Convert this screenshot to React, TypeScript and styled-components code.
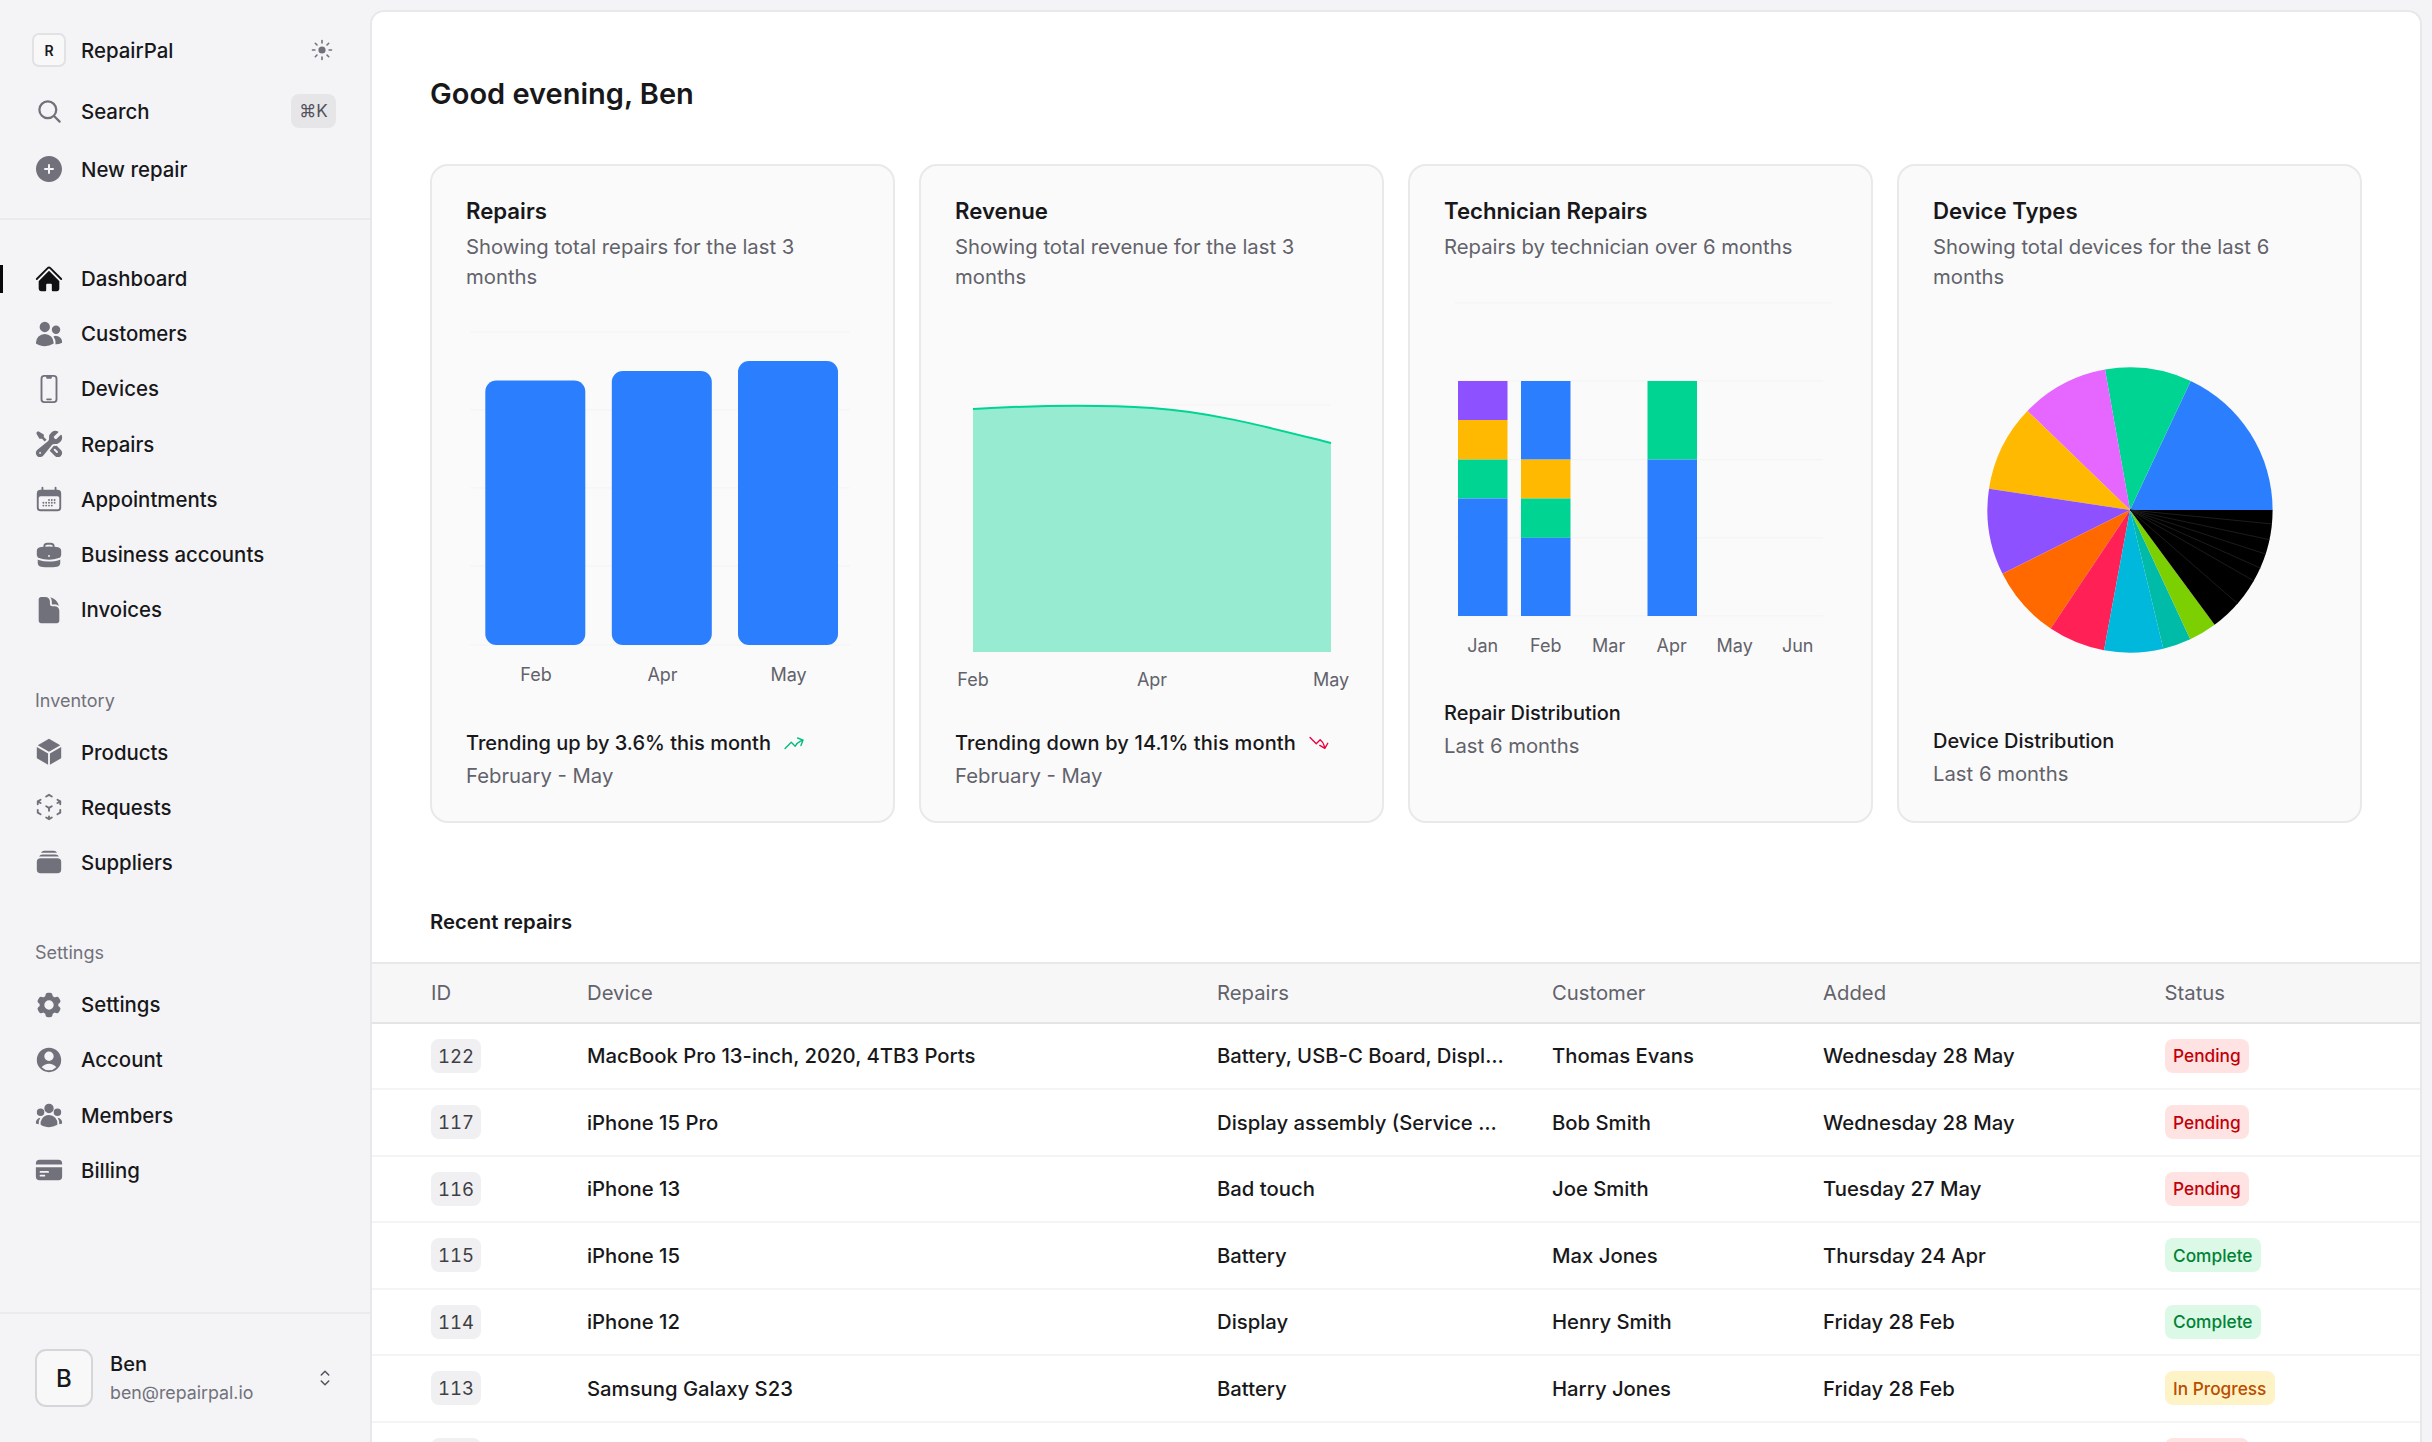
import React from "react";
import styled, { createGlobalStyle } from "styled-components";
import {
  HiBriefcase,
  HiCalendarDays,
  HiChevronUpDown,
  HiCog6Tooth,
  HiCreditCard,
  HiCube,
  HiCubeTransparent,
  HiDocument,
  HiHome,
  HiOutlineArrowTrendingDown,
  HiOutlineArrowTrendingUp,
  HiOutlineDevicePhoneMobile,
  HiOutlineMagnifyingGlass,
  HiPlusCircle,
  HiRectangleStack,
  HiUserCircle,
  HiUserGroup,
  HiUsers,
  HiWrenchScrewdriver,
} from "react-icons/hi2";

const GlobalStyle = createGlobalStyle`
  html, body, #root {
    margin: 0;
    height: 100%;
    overflow: hidden;
  }
  body {
    font-family: Inter, "Liberation Sans", sans-serif;
    color: #18181b;
    background: #f4f4f6;
  }
`;

const Shell = styled.div`
  display: flex;
  height: 100vh;
`;

const Sidebar = styled.aside`
  width: 370px;
  flex-shrink: 0;
  display: flex;
  flex-direction: column;
  background: #f4f4f6;
`;

const SideTop = styled.div`
  padding: 33px 34px 32px 32px;
  border-bottom: 2px solid #ebebee;
  display: flex;
  flex-direction: column;
`;

const TopRow = styled.div<{ $gap: number }>`
  height: 34px;
  display: flex;
  align-items: center;
  gap: 15px;
  margin-bottom: ${(p) => p.$gap}px;
  font-size: 20.4px;
  font-weight: 500;
`;

const LogoBox = styled.div`
  width: 34px;
  height: 34px;
  box-sizing: border-box;
  border: 2px solid #e2e2e5;
  border-radius: 7px;
  background: #f8f8f9;
  display: flex;
  align-items: center;
  justify-content: center;
  font-size: 14px;
  font-weight: 600;
`;

const IconSlot = styled.span<{ $active?: boolean }>`
  width: 34px;
  height: 34px;
  flex-shrink: 0;
  display: flex;
  align-items: center;
  justify-content: center;
  color: ${(p) => (p.$active ? "#111113" : "#71717b")};
`;

const Push = styled.span<{ $right?: number; $color?: string }>`
  margin-left: auto;
  margin-right: ${(p) => p.$right ?? 0}px;
  color: ${(p) => p.$color ?? "inherit"};
  display: flex;
`;

const Kbd = styled.kbd`
  width: 45px;
  height: 34px;
  border-radius: 8px;
  background: #e6e6e8;
  color: #52525b;
  font-family: Inter, "DejaVu Sans", sans-serif;
  font-size: 17px;
  font-weight: 400;
  display: flex;
  align-items: center;
  justify-content: center;
`;

const NavGroup = styled.nav<{ $top: number }>`
  padding: 0 32px;
  margin-top: ${(p) => p.$top}px;
`;

const GroupLabel = styled.div`
  height: 28px;
  line-height: 28px;
  margin-bottom: 9.6px;
  padding-left: 3px;
  font-size: 18px;
  color: #71717b;
`;

const NavItem = styled.a<{ $active?: boolean }>`
  position: relative;
  height: 55.2px;
  display: flex;
  align-items: center;
  gap: 15px;
  font-size: 20.4px;
  font-weight: 500;
  color: #18181b;

  ${(p) =>
    p.$active &&
    `&::before {
      content: "";
      position: absolute;
      left: -32px;
      top: 13.6px;
      width: 3px;
      height: 28px;
      background: #09090b;
    }`}
`;

const SideFooter = styled.div`
  margin-top: auto;
  height: 130px;
  box-sizing: border-box;
  border-top: 2px solid #ebebee;
  padding: 0 32px 0 35px;
  display: flex;
  align-items: center;
  gap: 17px;
`;

const Avatar = styled.div`
  width: 58px;
  height: 58px;
  box-sizing: border-box;
  border: 2px solid #d6d6da;
  border-radius: 11px;
  background: #f8f8f9;
  display: flex;
  align-items: center;
  justify-content: center;
  font-size: 24px;
  font-weight: 500;
`;

const UserName = styled.div`
  font-size: 20px;
  line-height: 28px;
  font-weight: 500;
`;

const UserMail = styled.div`
  margin-top: 2px;
  font-size: 17.8px;
  line-height: 26px;
  color: #71717b;
`;

const Main = styled.main`
  flex: 1;
  min-width: 0;
  margin: 10px 10px 0 0;
  background: #fff;
  border: 2px solid #e8e8ea;
  border-bottom: none;
  border-radius: 14px 14px 0 0;
  box-sizing: border-box;
  overflow: hidden;
`;

const Content = styled.div`
  padding: 62px 58px 0;
`;

const Title = styled.h1`
  margin: 0;
  font-size: 29px;
  line-height: 40px;
  font-weight: 600;
`;

const CardGrid = styled.div`
  margin-top: 50px;
  display: grid;
  grid-template-columns: repeat(4, 465px);
  gap: 24px;
`;

const Card = styled.section`
  height: 659px;
  box-sizing: border-box;
  padding: 29px 35px 29px 34px;
  background: #fafafa;
  border: 2px solid #e9e9eb;
  border-radius: 18px;
`;

const CardTitle = styled.h2`
  margin: 0 0 5px;
  font-size: 22.2px;
  line-height: 32px;
  font-weight: 600;
`;

const CardDesc = styled.p`
  margin: 0;
  font-size: 20.3px;
  line-height: 30px;
  color: #62626b;
`;

const ChartSvg = styled.svg`
  display: block;
  width: 391px;
  margin-top: -1px;
  overflow: visible;
`;

const AxisLabel = styled.text`
  font-size: 18px;
  fill: #62626b;
  text-anchor: middle;
  dominant-baseline: central;
`;

const FootStrong = styled.div<{ $track?: number }>`
  display: flex;
  align-items: center;
  gap: 12px;
  font-size: 20px;
  line-height: 32px;
  font-weight: 500;
  letter-spacing: ${(p) => p.$track ?? 0}px;
`;

const FootMuted = styled.div`
  margin-top: 1px;
  font-size: 20.3px;
  line-height: 32px;
  color: #62626b;
`;

const SectionTitle = styled.h3`
  margin: 84px 0 25px;
  font-size: 20.3px;
  line-height: 30px;
  font-weight: 600;
`;

const COLUMNS = "156px 630px 335px 271px 341.5px 1fr";

const HeadRow = styled.div`
  display: grid;
  grid-template-columns: ${COLUMNS};
  align-items: center;
  height: 61.5px;
  box-sizing: border-box;
  padding-left: 59px;
  background: #f7f7f8;
  border-top: 2px solid #e8e8ea;
  border-bottom: 2px solid #e4e4e7;
  font-size: 20.3px;
  color: #62626b;
`;

const Row = styled.div`
  display: grid;
  grid-template-columns: ${COLUMNS};
  align-items: center;
  height: 66.5px;
  box-sizing: border-box;
  padding-left: 59px;
  border-bottom: 2px solid #f4f4f5;
  font-size: 20.3px;
  font-weight: 500;
`;

const IdTag = styled.span`
  width: 50px;
  height: 34px;
  border-radius: 8px;
  background: #f0f0f2;
  color: #3f3f46;
  font-size: 18.5px;
  font-weight: 400;
  font-variant-numeric: tabular-nums;
  display: flex;
  align-items: center;
  justify-content: center;
`;

const statusColors = {
  Pending: { bg: "#ffe2e2", fg: "#c10007" },
  Complete: { bg: "#dcf8e6", fg: "#008236" },
  "In Progress": { bg: "#fef3c6", fg: "#bb4d00" },
};

type Status = keyof typeof statusColors;

const StatusTag = styled.span<{ $status: Status }>`
  justify-self: start;
  height: 34px;
  padding: 0 8.5px;
  border-radius: 8px;
  background: ${(p) => statusColors[p.$status].bg};
  color: ${(p) => statusColors[p.$status].fg};
  font-size: 17.3px;
  display: flex;
  align-items: center;
`;

const StrongSearchIcon = styled(HiOutlineMagnifyingGlass)`
  stroke-width: 2;
`;

const mainNav = [
  { label: "Dashboard", icon: HiHome, active: true },
  { label: "Customers", icon: HiUsers },
  { label: "Devices", icon: HiOutlineDevicePhoneMobile },
  { label: "Repairs", icon: HiWrenchScrewdriver },
  { label: "Appointments", icon: HiCalendarDays },
  { label: "Business accounts", icon: HiBriefcase },
  { label: "Invoices", icon: HiDocument },
];

const inventoryNav = [
  { label: "Products", icon: HiCube },
  { label: "Requests", icon: HiCubeTransparent },
  { label: "Suppliers", icon: HiRectangleStack },
];

const settingsNav = [
  { label: "Settings", icon: HiCog6Tooth },
  { label: "Account", icon: HiUserCircle },
  { label: "Members", icon: HiUserGroup },
  { label: "Billing", icon: HiCreditCard },
];

const repairs: [string, string, string, string, string, Status][] = [
  ["122", "MacBook Pro 13-inch, 2020, 4TB3 Ports", "Battery, USB-C Board, Displ…", "Thomas Evans", "Wednesday 28 May", "Pending"],
  ["117", "iPhone 15 Pro", "Display assembly (Service …", "Bob Smith", "Wednesday 28 May", "Pending"],
  ["116", "iPhone 13", "Bad touch", "Joe Smith", "Tuesday 27 May", "Pending"],
  ["115", "iPhone 15", "Battery", "Max Jones", "Thursday 24 Apr", "Complete"],
  ["114", "iPhone 12", "Display", "Henry Smith", "Friday 28 Feb", "Complete"],
  ["113", "Samsung Galaxy S23", "Battery", "Harry Jones", "Friday 28 Feb", "In Progress"],
  ["112", "iPhone 14", "Battery", "Amy Clark", "Friday 28 Feb", "Pending"],
];

const BLUE = "#2b7fff";
const GREEN = "#00d492";
const AMBER = "#ffb900";
const PURPLE = "#8e51ff";
const GRID = "#f3f3f4";

const NavLinks = ({ items }: { items: typeof mainNav }) => (
  <>
    {items.map((item) => (
      <NavItem key={item.label} $active={item.active}>
        <IconSlot $active={item.active}>
          <item.icon size={30} />
        </IconSlot>
        {item.label}
      </NavItem>
    ))}
  </>
);

const SunIcon = () => (
  <svg width="22" height="22" viewBox="0 0 22 22" stroke="#71717b" strokeWidth="1.6" strokeLinecap="round" fill="#71717b">
    <circle cx="11" cy="11" r="3.6" stroke="none" />
    <path d="M11 1.5v2.4M11 18.1v2.4M1.5 11h2.4M18.1 11h2.4M4.3 4.3 6 6M16 16l1.7 1.7M4.3 17.7 6 16M16 6l1.7-1.7" />
  </svg>
);

const Grid = ({ ys, x1, x2 }: { ys: number[]; x1: number; x2: number }) => (
  <>
    {ys.map((y) => (
      <line key={y} x1={x1} x2={x2} y1={y} y2={y} stroke={GRID} strokeWidth="1" />
    ))}
  </>
);

const RepairsChart = () => (
  <ChartSvg height="436" viewBox="-1 0 391 436">
    <Grid ys={[41, 119, 197, 275, 354]} x1={3} x2={383} />
    <rect x="18.3" y="89.6" width="100" height="264.4" rx="11" fill={BLUE} />
    <rect x="144.8" y="80" width="100" height="274" rx="11" fill={BLUE} />
    <rect x="271" y="70" width="100" height="284" rx="11" fill={BLUE} />
    <AxisLabel x="69" y="383">Feb</AxisLabel>
    <AxisLabel x="195.5" y="383">Apr</AxisLabel>
    <AxisLabel x="321.5" y="383">May</AxisLabel>
  </ChartSvg>
);

const RevenueChart = () => {
  const top = "M17 118C76 114.5 137 113 196 117C256 121 315 137 375 152";
  return (
    <ChartSvg height="436" viewBox="-1 0 391 436">
      <Grid ys={[114]} x1={17} x2={375} />
      <path d={`${top}V361H17Z`} fill={GREEN} fillOpacity="0.4" />
      <path d={top} fill="none" stroke={GREEN} strokeWidth="2" />
      <AxisLabel x="17" y="388">Feb</AxisLabel>
      <AxisLabel x="196" y="388">Apr</AxisLabel>
      <AxisLabel x="375" y="388">May</AxisLabel>
    </ChartSvg>
  );
};

const stacks = [
  { x: 14, parts: [[120, 159, PURPLE], [159, 198.6, AMBER], [198.6, 237.5, GREEN], [237.5, 355, BLUE]] },
  { x: 77, parts: [[120, 198.6, BLUE], [198.6, 237.5, AMBER], [237.5, 276.8, GREEN], [276.8, 355, BLUE]] },
  { x: 203.5, parts: [[120, 198.6, GREEN], [198.6, 355, BLUE]] },
] as { x: number; parts: [number, number, string][] }[];

const TechnicianChart = () => (
  <ChartSvg height="436" viewBox="0 0 391 436">
    <Grid ys={[42]} x1={11} x2={388} />
    <Grid ys={[120, 198.6, 276.8, 355]} x1={11} x2={379} />
    {stacks.map((s) =>
      s.parts.map(([y1, y2, fill]) => (
        <rect key={`${s.x}-${y1}`} x={s.x} y={y1} width="49.5" height={y2 - y1} fill={fill} />
      )),
    )}
    {["Jan", "Feb", "Mar", "Apr", "May", "Jun"].map((m, i) => (
      <AxisLabel key={m} x={38.7 + i * 63} y="384">{m}</AxisLabel>
    ))}
  </ChartSvg>
);

// angles in degrees, counter-clockwise from east, as read off the reference
const slices: [number, number, string][] = [
  [0, 64.8, BLUE],
  [64.8, 100.1, GREEN],
  [100.1, 136, "#e667ff"],
  [136, 171.4, AMBER],
  [171.4, 206.6, PURPLE],
  [206.6, 236.2, "#ff6900"],
  [236.2, 259.5, "#ff2056"],
  [259.5, 283.5, "#00b8db"],
  [283.5, 295, "#00bba7"],
  [295, 306.4, "#7ccf00"],
  [306.4, 360, "#000"],
];

const PIE_X = 197;
const PIE_Y = 219;
const PIE_R = 142.6;

const piePoint = (deg: number, r = PIE_R) => {
  const rad = (deg * Math.PI) / 180;
  return `${PIE_X + r * Math.cos(rad)} ${PIE_Y - r * Math.sin(rad)}`;
};

const DeviceChart = () => (
  <ChartSvg height="434" viewBox="0 0 391 434">
    {slices.map(([a, b, fill]) => (
      <path
        key={a}
        d={`M${PIE_X} ${PIE_Y}L${piePoint(a)}A${PIE_R} ${PIE_R} 0 ${b - a > 180 ? 1 : 0} 0 ${piePoint(b)}Z`}
        fill={fill}
      />
    ))}
    {[354.4, 348, 342, 336, 330.2, 319].map((a) => (
      <path key={a} d={`M${PIE_X} ${PIE_Y}L${piePoint(a)}`} stroke="#1c1c1c" strokeWidth="1" />
    ))}
  </ChartSvg>
);

export default function App() {
  return (
    <>
      <GlobalStyle />
      <Shell>
        <Sidebar>
          <SideTop>
            <TopRow $gap={27}>
              <LogoBox>R</LogoBox>
              RepairPal
              <Push $right={3}>
                <SunIcon />
              </Push>
            </TopRow>
            <TopRow $gap={24}>
              <IconSlot>
                <StrongSearchIcon size={27} />
              </IconSlot>
              Search
              <Push>
                <Kbd>⌘K</Kbd>
              </Push>
            </TopRow>
            <TopRow $gap={0}>
              <IconSlot>
                <HiPlusCircle size={32} />
              </IconSlot>
              New repair
            </TopRow>
          </SideTop>
          <NavGroup $top={31}>
            <NavLinks items={mainNav} />
          </NavGroup>
          <NavGroup $top={49.5}>
            <GroupLabel>Inventory</GroupLabel>
            <NavLinks items={inventoryNav} />
          </NavGroup>
          <NavGroup $top={49.5}>
            <GroupLabel>Settings</GroupLabel>
            <NavLinks items={settingsNav} />
          </NavGroup>
          <SideFooter>
            <Avatar>B</Avatar>
            <div>
              <UserName>Ben</UserName>
              <UserMail>ben@repairpal.io</UserMail>
            </div>
            <Push $right={1} $color="#52525b">
              <HiChevronUpDown size={24} />
            </Push>
          </SideFooter>
        </Sidebar>
        <Main>
          <Content>
            <Title>Good evening, Ben</Title>
            <CardGrid>
              <Card>
                <CardTitle>Repairs</CardTitle>
                <CardDesc>Showing total repairs for the last 3 months</CardDesc>
                <RepairsChart />
                <FootStrong>
                  Trending up by 3.6% this month
                  <HiOutlineArrowTrendingUp size={22} color="#00bc7d" />
                </FootStrong>
                <FootMuted>February - May</FootMuted>
              </Card>
              <Card>
                <CardTitle>Revenue</CardTitle>
                <CardDesc>Showing total revenue for the last 3 months</CardDesc>
                <RevenueChart />
                <FootStrong $track={0.14}>
                  Trending down by 14.1% this month
                  <HiOutlineArrowTrendingDown size={22} color="#ec003f" />
                </FootStrong>
                <FootMuted>February - May</FootMuted>
              </Card>
              <Card>
                <CardTitle>Technician Repairs</CardTitle>
                <CardDesc>Repairs by technician over 6 months</CardDesc>
                <TechnicianChart />
                <FootStrong>Repair Distribution</FootStrong>
                <FootMuted>Last 6 months</FootMuted>
              </Card>
              <Card>
                <CardTitle>Device Types</CardTitle>
                <CardDesc>Showing total devices for the last 6 months</CardDesc>
                <DeviceChart />
                <FootStrong>Device Distribution</FootStrong>
                <FootMuted>Last 6 months</FootMuted>
              </Card>
            </CardGrid>
            <SectionTitle>Recent repairs</SectionTitle>
          </Content>
          <HeadRow>
            <span>ID</span>
            <span>Device</span>
            <span>Repairs</span>
            <span>Customer</span>
            <span>Added</span>
            <span>Status</span>
          </HeadRow>
          {repairs.map(([id, device, work, customer, added, status]) => (
            <Row key={id}>
              <IdTag>{id}</IdTag>
              <span>{device}</span>
              <span>{work}</span>
              <span>{customer}</span>
              <span>{added}</span>
              <StatusTag $status={status}>{status}</StatusTag>
            </Row>
          ))}
        </Main>
      </Shell>
    </>
  );
}
